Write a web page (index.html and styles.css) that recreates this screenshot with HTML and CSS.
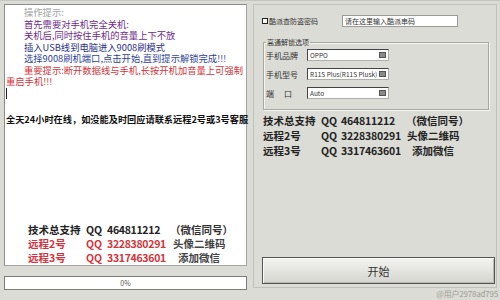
FILE: index.html
```html
<!DOCTYPE html>
<html lang="zh-CN">
<head>
    <meta charset="UTF-8">
    <title>9008 解锁工具</title>
    <link rel="stylesheet" href="styles.css">
</head>
<body>
    <div class="window">
        <div class="left">
            <div class="memo">
                <div class="tips">
                    <p class="tip gray">操作提示:</p>
                    <p class="tip purple">首先需要对手机完全关机:</p>
                    <p class="tip purple">关机后,同时按住手机的音量上下不放</p>
                    <p class="tip navy">插入USB线到电脑进入9008刷模式</p>
                    <p class="tip blue">选择9008刷机端口,点击开始,直到提示解锁完成!!!</p>
                    <p class="tip red">重要提示:断开数据线与手机,长按开机加音量上可强制</p>
                    <p class="tip red wrap">重启手机!!!</p>
                    <div class="caret"></div>
                </div>

                <p class="notice">全天24小时在线，如没能及时回应请联系远程2号或3号客服</p>

                <div class="contacts">
                    <span>技术总支持</span><span>QQ</span><span class="num">464811212</span><span class="note">（微信同号）</span>
                    <span class="red">远程2号</span><span class="red">QQ</span><span class="num red">3228380291</span><span class="note soft">头像二维码</span>
                    <span class="red">远程3号</span><span class="red">QQ</span><span class="num red">3317463601</span><span class="note soft indent">添加微信</span>
                </div>
            </div>
            <div class="progress">0%</div>
        </div>

        <div class="right">
            <div class="check-row">
                <span class="checkbox"></span>
                <span class="check-label">酷派查防盗密码</span>
                <span class="textbox">请在这里输入酷派串码</span>
            </div>

            <fieldset class="group">
                <legend>高通解锁选项</legend>
                <div class="field">
                    <span class="field-label">手机品牌</span>
                    <span class="combo">OPPO<i class="combo-btn"></i></span>
                </div>
                <div class="field">
                    <span class="field-label">手机型号</span>
                    <span class="combo">R11S Plus(R11S Plusk)<i class="combo-btn"></i></span>
                </div>
                <div class="field">
                    <span class="field-label spaced">端口</span>
                    <span class="combo">Auto<i class="combo-btn"></i></span>
                </div>
            </fieldset>

            <div class="support">
                <span>技术总支持</span><span>QQ</span><span class="num">464811212</span><span>（微信同号）</span>
                <span>远程2号</span><span>QQ</span><span class="num">3228380291</span><span class="nudge">头像二维码</span>
                <span>远程3号</span><span>QQ</span><span class="num">3317463601</span><span class="nudge more">添加微信</span>
            </div>

            <button class="start-btn">开始</button>
        </div>

        <div class="watermark">@用户2978ad795</div>
    </div>
</body>
</html>
```

FILE: styles.css
```css
* {
    margin: 0;
    padding: 0;
    box-sizing: border-box;
}

body {
    font-family: "Noto Sans CJK SC", "Noto Sans", sans-serif;
    background: #dcdcd6;
    width: 500px;
    height: 300px;
    overflow: hidden;
    color: #222;
}

.window {
    position: relative;
    display: flex;
    height: 300px;
    padding: 3px 0 0 4px;
    border-top: 1px solid #c6c6c0;
}

/* left column */
.left {
    width: 243px;
    display: flex;
    flex-direction: column;
}

.memo {
    height: 262px;
    background: #fff;
    border: 1px solid #a4a4a0;
    border-top-color: #8c8c88;
    border-left-color: #8c8c88;
    display: flex;
    flex-direction: column;
    padding-top: 2px;
}

.tip {
    font-size: 9.3px;
    line-height: 11.5px;
    padding-left: 19px;
    white-space: nowrap;
}

.tip.wrap {
    padding-left: 1px;
}

.gray { color: #a2a2a2; }
.purple { color: #6e2a8c; }
.navy { color: #2b2f8c; }
.blue { color: #2f3f9c; }
.red { color: #d2343c; }

.caret {
    height: 11px;
    margin-left: 1px;
    border-left: 1px solid #222;
}

.notice {
    margin-top: 14px;
    padding-left: 1px;
    font-size: 9.2px;
    line-height: 12px;
    font-weight: bold;
    color: #111;
    white-space: nowrap;
}

.contacts {
    margin-top: auto;
    margin-left: 23px;
    display: grid;
    grid-template-columns: 58px 21px max-content max-content;
    column-gap: 0;
    font-size: 10.5px;
    line-height: 14px;
    font-weight: bold;
    color: #222;
    white-space: nowrap;
}

.contacts .num {
    letter-spacing: -0.3px;
    padding-right: 4px;
}

.contacts .note {
    color: #333;
}

.contacts .soft {
    padding-left: 3px;
    color: #444;
}

.contacts .indent {
    padding-left: 8px;
}

.progress {
    margin-top: 10px;
    height: 14px;
    background: #fff;
    border: 1px solid #7c7c78;
    font-size: 7px;
    line-height: 12px;
    text-align: center;
    color: #555;
}

/* right panel */
.right {
    width: 244px;
    height: 284px;
    margin-left: 6px;
    border: 1px solid #c2c2bc;
    display: flex;
    flex-direction: column;
}

.check-row {
    display: flex;
    align-items: center;
    height: 12px;
    margin-top: 10px;
    padding-left: 8px;
}

.checkbox {
    width: 6px;
    height: 6px;
    border: 1px solid #222;
    background: #fff;
}

.check-label {
    width: 74px;
    padding-left: 1px;
    font-size: 7px;
    color: #333;
}

.textbox {
    width: 116px;
    height: 12px;
    background: #fff;
    border: 1px solid #9a9a96;
    font-size: 7px;
    line-height: 10px;
    padding-left: 2px;
    color: #333;
}

.group {
    margin: 11px 0 0 9px;
    width: 226px;
    height: 72px;
    border: 1px solid #a8a8a2;
    box-shadow: inset 1px 1px 0 #f4f4f0, 1px 1px 0 #f4f4f0;
    padding: 2px 0 0 2px;
}

.group legend {
    font-size: 7px;
    line-height: 9px;
    color: #333;
    padding: 0 1px;
}

.field {
    display: flex;
    align-items: center;
    height: 12px;
    margin-bottom: 7px;
}

.field-label {
    width: 41px;
    font-size: 8px;
    color: #333;
}

.field-label.spaced {
    letter-spacing: 10px;
}

.combo {
    position: relative;
    width: 82px;
    height: 12px;
    background: #fff;
    border: 1px solid #444;
    border-right-color: #b0b0aa;
    border-bottom-color: #b0b0aa;
    font-size: 6.5px;
    line-height: 10px;
    padding-left: 2px;
    color: #333;
    white-space: nowrap;
    overflow: hidden;
}

.combo-btn {
    position: absolute;
    right: 2px;
    top: 2px;
    width: 7px;
    height: 6px;
    background: #8a8a86;
    border: 1px solid #555;
}

.support {
    margin: 3px 0 0 9px;
    display: grid;
    grid-template-columns: 58px 20px max-content max-content;
    font-size: 10.5px;
    line-height: 15px;
    font-weight: bold;
    color: #222;
    white-space: nowrap;
}

.support .num {
    letter-spacing: -0.2px;
    padding-right: 5px;
}

.support .nudge {
    padding-left: 1px;
}

.support .nudge.more {
    padding-left: 6px;
}

.start-btn {
    margin: auto 0 3px 8px;
    width: 233px;
    height: 27px;
    border: 1px solid #555;
    box-shadow: inset 1px 1px 0 #fafaf8, inset -1px -1px 0 #b8b8b2;
    background: linear-gradient(#f3f3f0, #d6d6d0);
    font-family: "Noto Sans CJK SC", sans-serif;
    font-size: 11px;
    color: #333;
}

.watermark {
    position: absolute;
    right: 2px;
    bottom: 1px;
    font-size: 8px;
    color: #9c9c98;
    letter-spacing: -0.2px;
}
```
